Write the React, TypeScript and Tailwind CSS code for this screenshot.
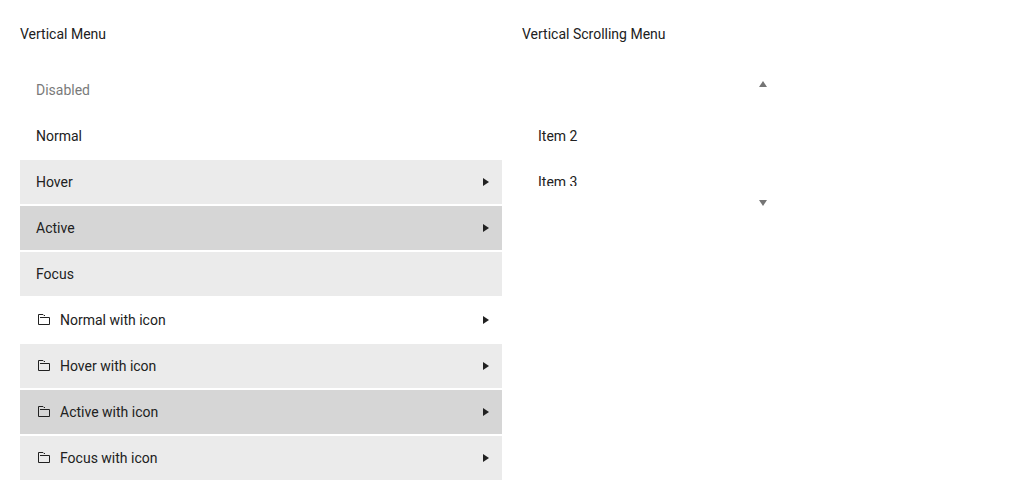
import { useLayoutEffect, useRef } from "react";

type Item = {
  label: string;
  disabled?: boolean;
  icon?: boolean;
  submenu?: boolean;
  tone?: string;
};

const HOVER = "bg-[#ebebeb]";
const ACTIVE = "bg-[#d6d6d6]";

const items: Item[] = [
  { label: "Disabled", disabled: true },
  { label: "Normal" },
  { label: "Hover", submenu: true, tone: HOVER },
  { label: "Active", submenu: true, tone: ACTIVE },
  { label: "Focus", tone: HOVER },
  { label: "Normal with icon", icon: true, submenu: true },
  { label: "Hover with icon", icon: true, submenu: true, tone: HOVER },
  { label: "Active with icon", icon: true, submenu: true, tone: ACTIVE },
  { label: "Focus with icon", icon: true, submenu: true, tone: HOVER },
];

const scrollingItems: Item[] = [{ label: "Item 1" }, { label: "Item 2" }, { label: "Item 3" }];

function FolderIcon() {
  return (
    <svg className="size-4 shrink-0" viewBox="0 0 16 16" fill="none" stroke="currentColor" aria-hidden="true">
      <path d="M4 5.5H13.5V12.5H2.5V2.5H7L8 3.5H9" />
    </svg>
  );
}

function Triangle({ points }: { points: string }) {
  return (
    <svg className="size-4 shrink-0" viewBox="0 0 16 16" fill="currentColor" aria-hidden="true">
      <polygon points={points} />
    </svg>
  );
}

function MenuItem({ label, disabled, icon, submenu, tone }: Item) {
  return (
    <li role="none">
      <button
        type="button"
        role="menuitem"
        disabled={disabled}
        aria-haspopup={submenu ? "menu" : undefined}
        className={`flex h-11 w-full items-center gap-2 pr-2 pl-4 text-left disabled:opacity-60 ${tone ?? ""}`}
      >
        {icon && <FolderIcon />}
        <span className="grow">{label}</span>
        {submenu && <Triangle points="5,4 11,8 5,12" />}
      </button>
    </li>
  );
}

function ScrollingMenu() {
  const view = useRef<HTMLDivElement>(null);
  const scroll = (by: number) => view.current?.scrollBy({ top: by });

  useLayoutEffect(() => {
    if (view.current) view.current.scrollTop = 32;
  }, []);

  return (
    <div>
      <button
        type="button"
        aria-label="Scroll up"
        onClick={() => scroll(-46)}
        className="flex h-8 w-full items-center justify-center text-[#757575]"
      >
        <Triangle points="4,11 8,5 12,11" />
      </button>
      <div ref={view} className="h-[86px] overflow-hidden">
        <ul role="menu" className="flex flex-col gap-0.5">
          {scrollingItems.map((item) => (
            <MenuItem key={item.label} {...item} />
          ))}
        </ul>
      </div>
      <button
        type="button"
        aria-label="Scroll down"
        onClick={() => scroll(46)}
        className="flex h-8 w-full items-center justify-center text-[#757575]"
      >
        <Triangle points="4,6 12,6 8,12" />
      </button>
    </div>
  );
}

export default function App() {
  return (
    <main className="grid grid-cols-2 gap-5 bg-white p-5 font-['Roboto',sans-serif] text-sm leading-7 text-[#212121]">
      <section className="flex flex-col gap-5">
        <h2>Vertical Menu</h2>
        <ul role="menu" className="flex flex-col gap-0.5">
          {items.map((item) => (
            <MenuItem key={item.label} {...item} />
          ))}
        </ul>
      </section>
      <section className="flex flex-col gap-5">
        <h2>Vertical Scrolling Menu</h2>
        <ScrollingMenu />
      </section>
    </main>
  );
}
